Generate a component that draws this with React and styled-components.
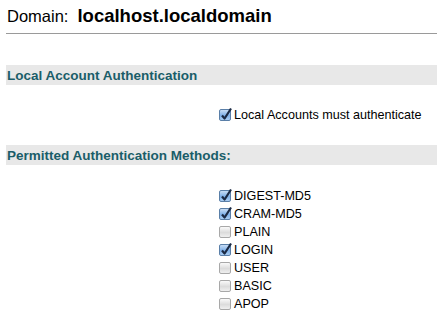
import React from 'react'
import styled, { createGlobalStyle } from 'styled-components'

const GlobalStyle = createGlobalStyle`
  body {
    margin: 0;
    padding: 0 0 0 6px;
    background: #fff;
    font-family: "Liberation Sans", Arial, sans-serif;
    color: #000;
  }
`

const Page = styled.div`
  display: flex;
  flex-direction: column;
`

const Title = styled.h1`
  margin: 0;
  padding: 4px 0 0 1px;
  height: 29px;
  box-sizing: content-box;
  font-size: 16.5px;
  font-weight: normal;
  line-height: 23px;
  border-bottom: 1px solid #9a9a9a;
  b {
    margin-left: 9px;
    font-weight: bold;
    font-size: 18.5px;
  }
`

const SectionHead = styled.h2`
  margin: ${p => p.$top}px 0 0;
  height: 20px;
  background: #e8e8e8;
  color: #1a5d69;
  font-size: 13.5px;
  font-weight: bold;
  line-height: 21px;
  padding-left: 1px;
`

const Options = styled.div`
  display: grid;
  grid-template-columns: 213px 1fr;
  padding-top: ${p => p.$top}px;
`

const List = styled.div`
  grid-column: 2;
  display: flex;
  flex-direction: column;
`

const Row = styled.label`
  display: flex;
  align-items: center;
  height: 18px;
  font-size: 12.6px;
  gap: 3px;
`

const Box = styled.span`
  width: 12px;
  height: 12px;
  box-sizing: border-box;
  border-radius: 2px;
  border: 1px solid ${p => (p.$checked ? '#5a7fa8' : '#a8a8a8')};
  background: ${p =>
    p.$checked
      ? 'linear-gradient(#c8ddf5, #7fb0e8 55%, #a9cdf3)'
      : 'linear-gradient(#fafafa, #dcdcdc 55%, #efefef)'};
  position: relative;
  flex: none;
  svg {
    position: absolute;
    left: 0;
    top: -3px;
  }
`

function Check({ checked, label }) {
  return (
    <Row>
      <Box $checked={checked}>
        {checked && (
          <svg width="13" height="14" viewBox="0 0 13 14">
            <path d="M2 8.5 L4.6 11.5 L11 1.5" fill="none" stroke="#1b2a44" strokeWidth="2.2" strokeLinejoin="round" />
          </svg>
        )}
      </Box>
      {label}
    </Row>
  )
}

const methods = [
  ['DIGEST-MD5', true],
  ['CRAM-MD5', true],
  ['PLAIN', false],
  ['LOGIN', true],
  ['USER', false],
  ['BASIC', false],
  ['APOP', false],
]

export default function App() {
  return (
    <>
      <GlobalStyle />
      <Page>
        <Title>
          Domain:<b>localhost.localdomain</b>
        </Title>
        <SectionHead $top={31}>Local Account Authentication</SectionHead>
        <Options $top={21}>
          <List>
            <Check checked label="Local Accounts must authenticate" />
          </List>
        </Options>
        <SectionHead $top={21}>Permitted Authentication Methods:</SectionHead>
        <Options $top={22}>
          <List>
            {methods.map(([name, on]) => (
              <Check key={name} checked={on} label={name} />
            ))}
          </List>
        </Options>
      </Page>
    </>
  )
}
